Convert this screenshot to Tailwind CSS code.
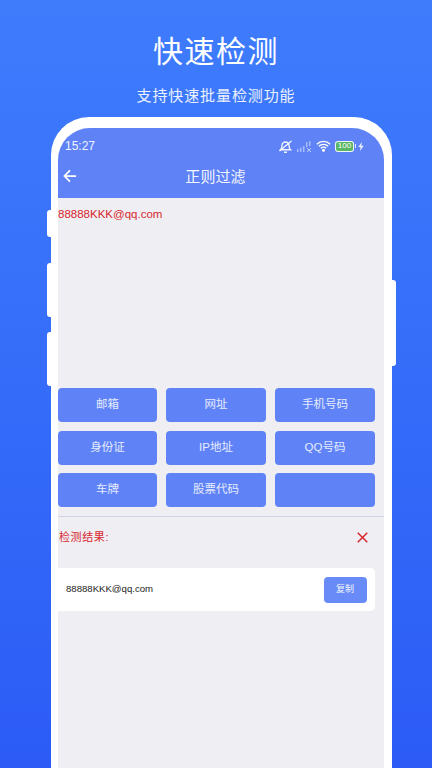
<!DOCTYPE html>
<html lang="zh">

<head>
    <meta charset="UTF-8">
    <meta name="viewport" content="width=device-width, initial-scale=1.0">
    <title>快速检测</title>
    <script src="https://cdn.jsdelivr.net/npm/@tailwindcss/browser@4"></script>
</head>

<body class="m-0">
    <div class="w-[432px] h-[768px] overflow-hidden bg-gradient-to-b from-[#3f7cfc] to-[#2c5bf6] font-['Liberation_Sans','Noto_Sans_CJK_SC',sans-serif]">
        <!-- Heading -->
        <h1 class="pt-[31px] h-[84px] text-center text-[30px] leading-[42px] font-normal tracking-[1.5px] text-white">快速检测</h1>
        <p class="h-[33px] text-center text-[15px] leading-[24px] tracking-[0.9px] text-white/90">支持快速批量检测功能</p>

        <!-- Phone -->
        <div class="relative ml-[51px] w-[341px] h-[700px] rounded-t-[38px] bg-white pt-[11px] pl-[7px] pr-[8px]">
            <div class="absolute left-[-4px] top-[93px] w-[4px] h-[27px] rounded-l-[3px] bg-white"></div>
            <div class="absolute left-[-4px] top-[146px] w-[4px] h-[54px] rounded-l-[3px] bg-white"></div>
            <div class="absolute left-[-4px] top-[215px] w-[4px] h-[54px] rounded-l-[3px] bg-white"></div>
            <div class="absolute right-[-4px] top-[163px] w-[4px] h-[86px] rounded-r-[3px] bg-white"></div>

            <div class="h-[700px] overflow-hidden rounded-t-[32px] bg-[#efeff3]">
                <!-- App bar -->
                <div class="h-[70px] bg-[#5f83f6] text-white">
                    <div class="flex h-[35px] items-center justify-between pl-[7px] pr-[20px] pt-[1px]">
                        <span class="text-[12px] leading-none text-white/90">15:27</span>
                        <div class="flex items-center">
                            <svg class="w-[15px] h-[13px]" viewBox="0 0 15 13" fill="none" stroke="#fff" stroke-opacity=".9" stroke-width="1.400">
                                <path d="M2.500 9.800c1.200-1.200 1.500-2.400 1.500-4.300a3.500 3.500 0 0 1 7 0c0 1.900.3 3.100 1.500 4.300z" />
                                <path d="M1.500 11 13.500 1M6 12.300h3" />
                            </svg>
                            <svg class="ml-[4px] w-[15px] h-[11px]" viewBox="0 0 15 11" fill="#fff" fill-opacity=".45">
                                <rect x="0" y="8" width="1.500" height="3" />
                                <rect x="3" y="6.500" width="1.500" height="4.500" />
                                <rect x="6" y="5" width="1.500" height="6" />
                                <rect x="9" y="1" width="1.500" height="5" />
                                <rect x="12" y="0" width="1.500" height="5" />
                                <path d="M10 7l4 4m0-4l-4 4" stroke="#fff" stroke-opacity=".6" fill="none" />
                            </svg>
                            <svg class="ml-[4px] w-[15px] h-[12px]" viewBox="0 0 15 12" fill="none" stroke="#fff" stroke-width="1.300">
                                <path d="M.8 4.200a9.500 9.500 0 0 1 13.400 0M2.800 6.300a6.600 6.600 0 0 1 9.400 0M4.800 8.300a3.800 3.800 0 0 1 5.400 0" />
                                <circle cx="7.500" cy="10.300" r=".9" fill="#fff" />
                            </svg>
                            <div class="ml-[4px] flex h-[11px] w-[19px] items-center justify-center rounded-[3px] border border-white/90 bg-[#5ab565] text-[8px] leading-none text-white">100</div>
                            <div class="ml-[1px] h-[4px] w-[1px] bg-white/80"></div>
                            <svg class="ml-[2px] w-[6px] h-[9px]" viewBox="0 0 6 9" fill="#fff" fill-opacity=".85">
                                <path d="M3.800 0 .3 5h2.200L2 9l3.700-5.200H3.400z" />
                            </svg>
                        </div>
                    </div>
                    <div class="relative flex h-[35px] items-center justify-center pr-[11px]">
                        <svg class="absolute left-[5px] top-[6px] w-[14px] h-[14px]" viewBox="0 0 16 16" fill="none" stroke="#fff" stroke-width="2">
                            <path d="M15 8H2M8 1.700 1.700 8 8 14.300" />
                        </svg>
                        <span class="text-[15px] leading-none tracking-[0.1px] text-white/95 mb-[8px]">正则过滤</span>
                    </div>
                </div>

                <!-- Input -->
                <div class="h-[190px] pt-[9px] text-[11.500px] leading-[15px] text-[#d8262f]">
                    <span class="block">88888KKK@qq.com</span>
                </div>

                <!-- Type buttons -->
                <div class="grid w-[317px] grid-cols-[99px_100px_100px] gap-x-[9px] gap-y-[8.500px] text-[11.500px] text-white/85">
                    <div class="flex h-[34px] items-center justify-center rounded-[4px] bg-[#5f83f6]">邮箱</div>
                    <div class="flex h-[34px] items-center justify-center rounded-[4px] bg-[#5f83f6]">网址</div>
                    <div class="flex h-[34px] items-center justify-center rounded-[4px] bg-[#5f83f6]">手机号码</div>
                    <div class="flex h-[34px] items-center justify-center rounded-[4px] bg-[#5f83f6]">身份证</div>
                    <div class="flex h-[34px] items-center justify-center rounded-[4px] bg-[#5f83f6]">IP地址</div>
                    <div class="flex h-[34px] items-center justify-center rounded-[4px] bg-[#5f83f6]">QQ号码</div>
                    <div class="flex h-[34px] items-center justify-center rounded-[4px] bg-[#5f83f6]">车牌</div>
                    <div class="flex h-[34px] items-center justify-center rounded-[4px] bg-[#5f83f6]">股票代码</div>
                    <div class="flex h-[34px] items-center justify-center rounded-[4px] bg-[#5f83f6]"></div>
                </div>

                <div class="mt-[9px] h-px bg-[#cfd3e6]"></div>

                <!-- Result header -->
                <div class="flex h-[41px] items-center justify-between pl-[1px] pr-[16px]">
                    <span class="text-[11px] tracking-[0.6px] text-[#d8262f]">检测结果:</span>
                    <svg class="mb-[1px] w-[11px] h-[11px]" viewBox="0 0 12 12" fill="none" stroke="#d8262f" stroke-width="1.600">
                        <path d="M.8.8l10.400 10.400M11.200.8.8 11.200" />
                    </svg>
                </div>

                <!-- Result row -->
                <div class="mt-[10px] flex h-[43px] w-[317px] items-center justify-between rounded-r-[5px] bg-white pl-[8px] pr-[8.500px]">
                    <span class="text-[9.600px] text-[#222]">88888KKK@qq.com</span>
                    <div class="flex h-[26px] w-[43px] items-center justify-center rounded-[4px] bg-[#688bf7] text-[9px] text-white/90">复制</div>
                </div>
            </div>
        </div>
    </div>
</body>

</html>
